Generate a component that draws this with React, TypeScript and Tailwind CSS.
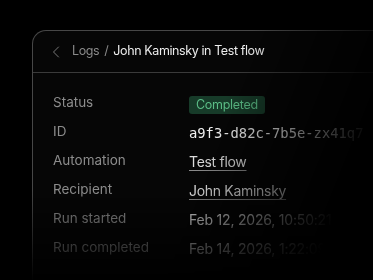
import { ChevronLeft } from 'lucide-react'

const rows = [
  { label: 'Status', kind: 'badge', value: 'Completed' },
  { label: 'ID', kind: 'mono', value: 'a9f3-d82c-7b5e-zx41q7' },
  { label: 'Automation', kind: 'link', value: 'Test flow' },
  { label: 'Recipient', kind: 'link', value: 'John Kaminsky' },
  { label: 'Run started', kind: 'text', value: 'Feb 12, 2026, 10:50:21 AM' },
  { label: 'Run completed', kind: 'text', value: 'Feb 14, 2026, 1:22:09 PM' },
]

function Value({ kind, value }: { kind: string; value: string }) {
  if (kind === 'badge') {
    return (
      <span className="inline-flex h-[18px] items-center rounded-[3px] bg-[#173b29] px-[7px] text-[12.5px] tracking-[-0.3px] text-[#5bbd86]">
        {value}
      </span>
    )
  }
  if (kind === 'mono') {
    return (
      <span className="font-['DejaVu_Sans_Mono',monospace] text-[13.8px] text-[#f0f0f0]">
        {value}
      </span>
    )
  }
  if (kind === 'link') {
    return (
      <span className="text-[14px] tracking-[-0.3px] text-[#dcdcdc] underline decoration-[#8a8a8a] underline-offset-[3px]">
        {value}
      </span>
    )
  }
  return <span className="text-[14px] tracking-[-0.2px] text-[#e6e6e6]">{value}</span>
}

export default function App() {
  return (
    <div className="h-[280px] w-[373px] overflow-hidden bg-black font-['Inter',sans-serif]">
      <div className="h-full w-full [mask-image:linear-gradient(to_bottom,black_190px,transparent_282px)]">
        <div className="h-full w-full pl-[32px] pt-[30px] [mask-image:linear-gradient(111.8deg,black_245px,transparent_392px)]">
          <div className="h-[300px] w-[420px] rounded-tl-[14px] border-l border-t border-[#474747] bg-[#060606]">
            <div className="flex h-[42px] items-center border-b border-[#3a3a3a] pl-[13px] text-[12.5px] tracking-[-0.4px]">
              <ChevronLeft className="mr-[6px] h-[20px] w-[20px] text-[#777]" strokeWidth={1.2} />
              <span className="text-[#8a8a8a]">Logs</span>
              <span className="mx-[5px] text-[#8a8a8a]">/</span>
              <span className="text-[#ececec]">John Kaminsky in Test flow</span>
            </div>
            <div className="flex flex-col pl-[20px] pt-[15px]">
              {rows.map((r) => (
                <div key={r.label} className="flex h-[29px] items-center">
                  <div className="w-[136px] shrink-0 text-[13.5px] text-[#8c8c8c]">{r.label}</div>
                  <div className="whitespace-nowrap">
                    <Value kind={r.kind} value={r.value} />
                  </div>
                </div>
              ))}
            </div>
          </div>
        </div>
      </div>
    </div>
  )
}
